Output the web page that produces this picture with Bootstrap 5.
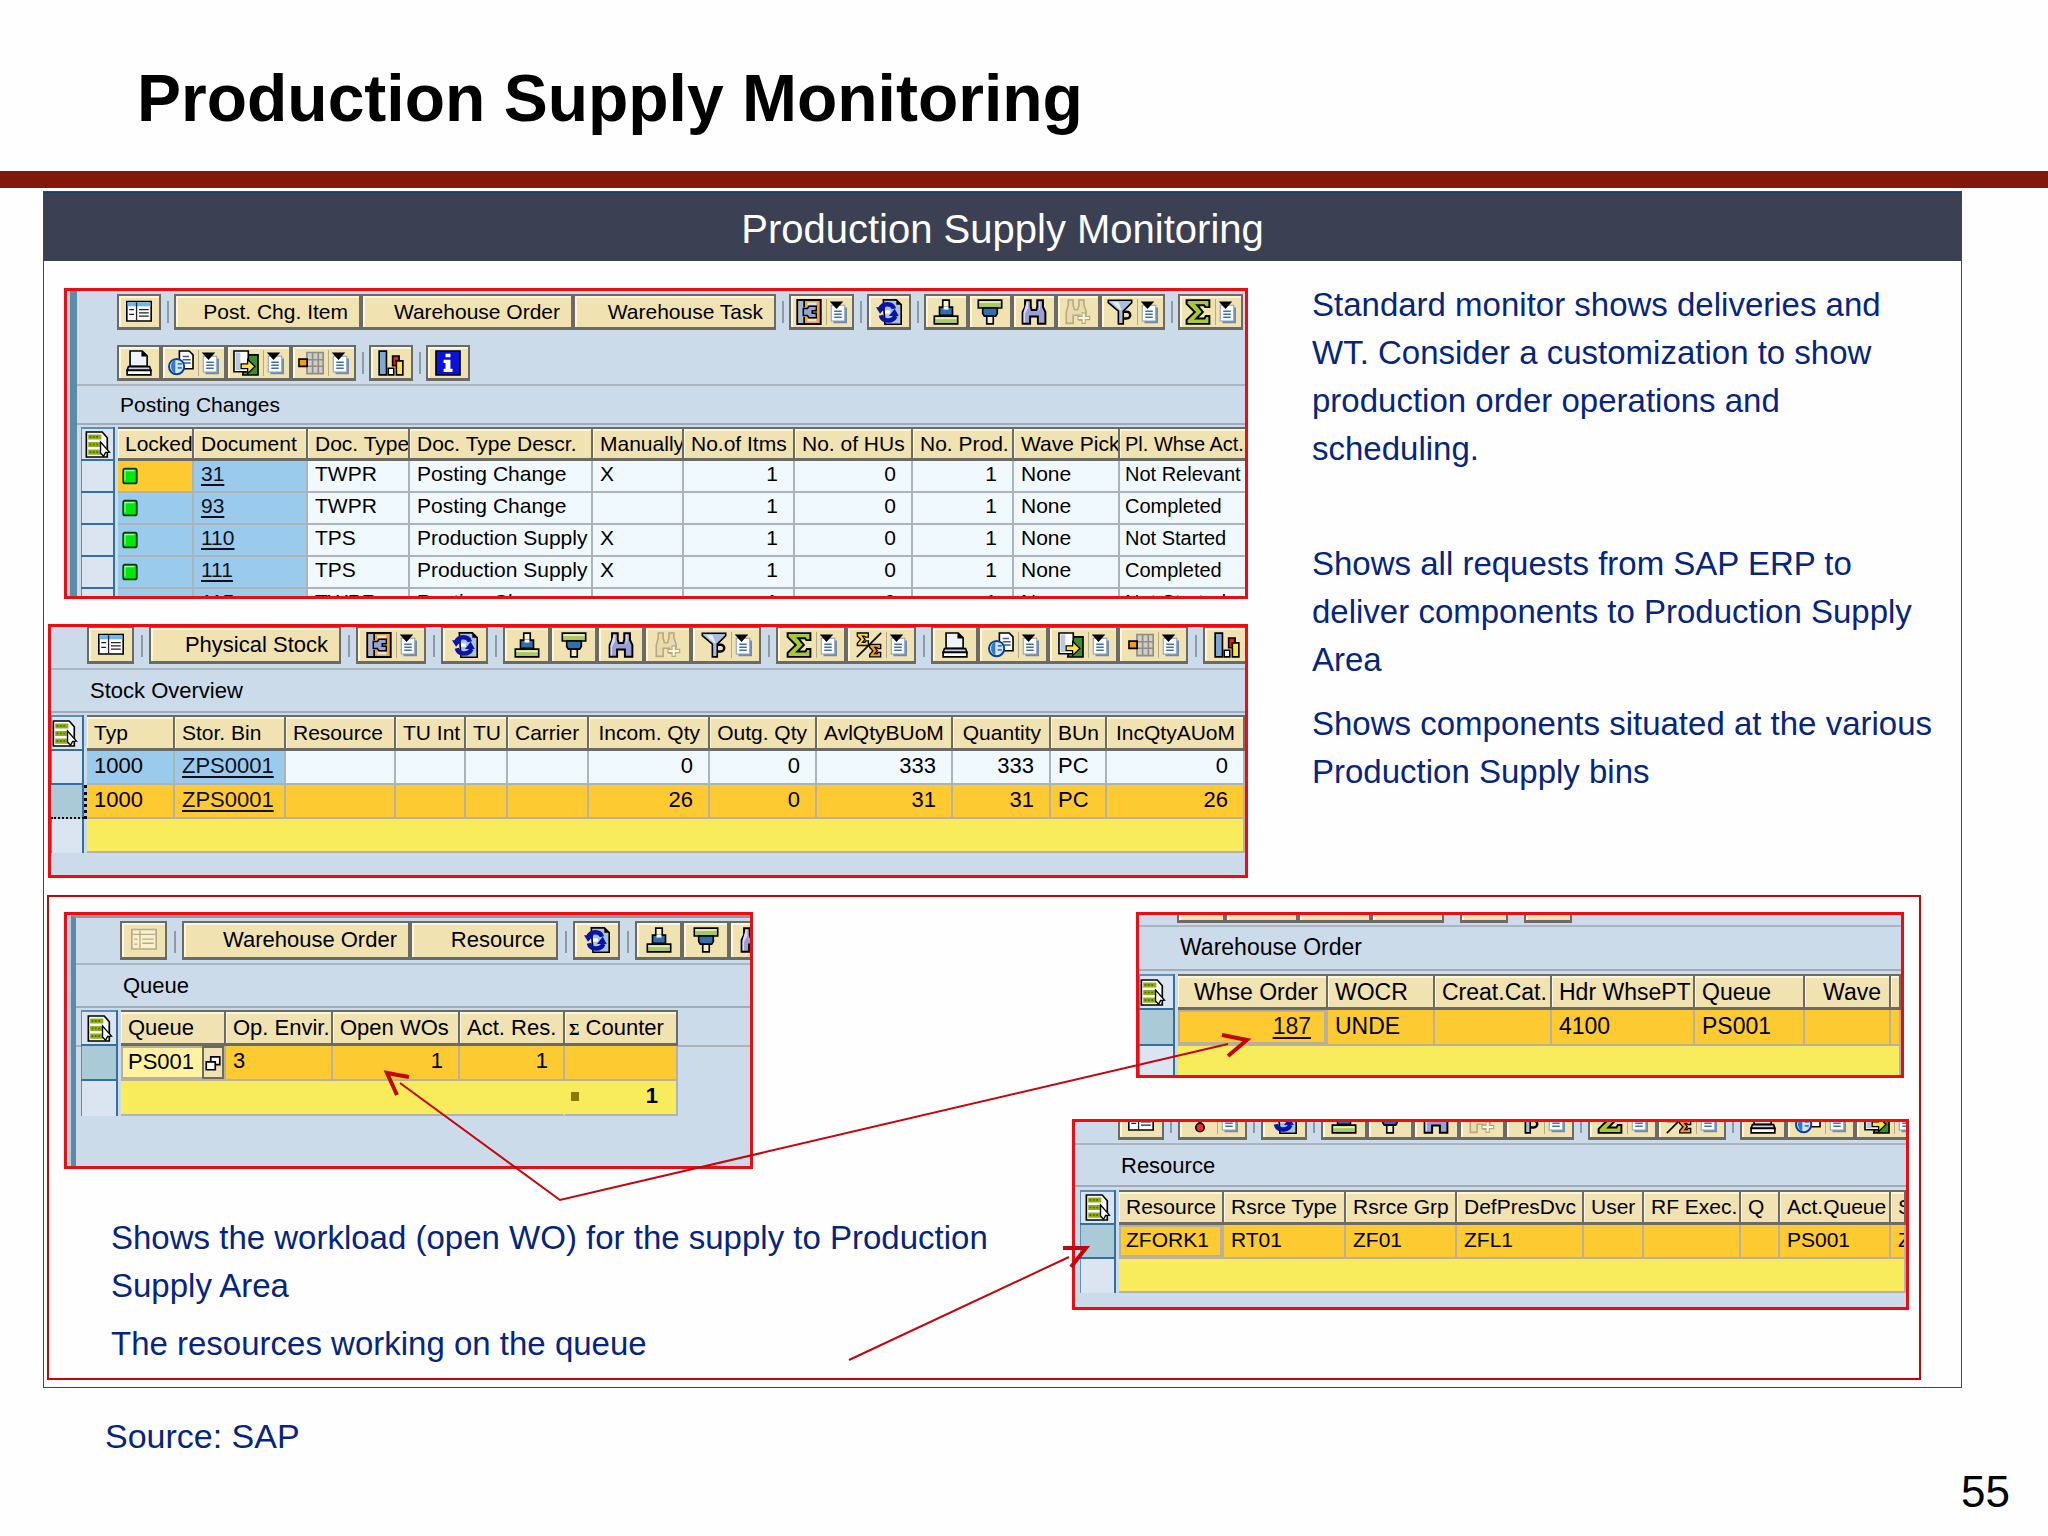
<!DOCTYPE html>
<html lang="en">
<head>
<meta charset="utf-8">
<meta name="viewport" content="width=device-width, initial-scale=1">
<title>Production Supply Monitoring</title>
<link href="https://cdn.jsdelivr.net/npm/bootstrap@5.3.0/dist/css/bootstrap.min.css" rel="stylesheet">
<style>
  body { background: #fefefe; font-family: "Liberation Sans", Arial, sans-serif; color: #000; }
  .slide-head { height: 188px; padding: 50px 0 0 137px; border-bottom: 17px solid #82170b; }
  .slide-head h1 { font: bold 66px/96px "Liberation Sans", Arial, sans-serif; margin: 0; }
  .slide-card { margin: 3px 86px 0 43px; border: 1px solid #3e4656; border-radius: 0; background: #fefefe; }
  .slide-card > .card-header { background: #3b4152; color: #fff; font-size: 40px; line-height: 48px; padding: 12px 0 8px; border: 0; border-top: 1px solid #1f3f63; border-radius: 0; }
  .slide-card > .card-body { padding: 27px 0 7px 3px; }
  .note { font-size: 33px; line-height: 48px; color: #06257c; margin: 0; }
  .top-area { grid-template-columns: minmax(0, 1201fr) minmax(0, 713fr); }
  .notes { padding: 0 22px 0 64px; margin-top: -7px; }
  .note-gap { margin-top: 67px; }
  .note-next { margin-top: 16px; }
  .flow-box { border: 2px solid #c4060c; margin: 17px 40px 0 0; padding-bottom: 10px; grid-template-columns: minmax(0, 1023fr) minmax(0, 847fr); }
  .flow-left { padding: 15px 40px 0 15px; }
  .flow-right { padding: 15px 10px 0 0; }
  .flow-text { margin: 45px 0 0 47px; }
  .flow-text .note + .note { margin-top: 10px; }
  .arrows { position: absolute; left: -2px; top: -2px; width: calc(100% + 4px); height: calc(100% + 4px); pointer-events: none; }
  .source { font-size: 34px; line-height: 40px; color: #06257c; margin: 28px 0 0 105px; }
  .page-no { font-size: 44px; line-height: 50px; padding: 11px 38px 0 0; margin: 0; }

  /* SAP GUI windows */
  .gui { border: 3px solid #ee0b12; background: #ccdbea; overflow: hidden; font-size: 22px; line-height: 26px; --ic: 47px; --mn: 70px; --sp: 15px; --bh: 38px; --th: 36px; --rh: 34px; --pad: 36px; --gap: 4px; }
  .gui-post { height: 311px; margin-left: 17px; font-size: 21px; --ic: 44px; --mn: 65px; --sp: 13px; --bh: 36px; --th: 34px; --rh: 32px; --pad: 40px; --gap: 3px; }
  .gui-stock { height: 254px; margin: 25px 0 0 1px; }
  .gui-queue { height: 257px; max-width: 689px; --bh: 39px; --rh: 35px; --pad: 44px; --gap: 3px; }
  .gui-order { height: 166px; margin-left: 64px; margin-right: 5px; font-size: 23px; --ic: 48px; --mn: 73px; --sp: 16px; --rh: 36px; --pad: 38px; --gap: 2px; }
  .gui-res { height: 191px; margin-top: 41px; --ic: 46px; --mn: 69px; --sp: 14px; --th: 35px; --pad: 43px; --gap: 3px; }
  .gui-stock .alv th, .gui-res .alv { font-size: 21px; }
  .gui-edge { border-left: 7px solid #5d8aa6; margin-left: 3px; height: 100%; box-shadow: -3px 0 0 #b5cfe0; padding-top: 3px; }
  .gui-queue .gui-edge { border-left-width: 5px; margin-left: 4px; border-top: 3px solid #8e9aa3; }

  .tools { display: flex; align-items: flex-end; overflow: hidden; white-space: nowrap; padding-left: var(--pad); height: var(--bh); }
  .tools + .tools { margin-top: 15px; }
  .gui-stock .tools { height: 37px; }
  .gui-order .tools { height: 8px; }
  .gui-res .tools { height: 18px; }
  .tools .btn { flex: none; height: var(--bh); width: var(--ic); padding: 0; border: 2px solid #6c6a64; border-bottom-width: 3px; border-radius: 0; background: #f0e2b1; box-shadow: inset 2px 2px 0 #fbf6de; font-size: inherit; line-height: 26px; color: #000; display: flex; align-items: center; justify-content: center; gap: 4px; }
  .tools .btn.more { width: var(--mn); }
  .tools .btn.wide { justify-content: flex-end; padding-right: 11px; width: var(--w); }
  .tools .rule { flex: none; width: var(--sp); height: 22px; margin-bottom: 7px; background: linear-gradient(#8f9aa6, #8f9aa6) center / 2px 100% no-repeat; }
  .tools svg { width: 26px; height: 26px; flex: none; }
  .tools svg.drop { width: 21px; border-left: 1px solid #b6ab88; padding-left: 2px; }
  .w-item { --w: 187px; } .w-order { --w: 212px; } .w-task { --w: 203px; } .w-stock { --w: 192px; } .w-queueorder { --w: 228px; } .w-resource { --w: 148px; }
  .gui-title { border-top: 2px solid #abb5c0; border-bottom: 2px solid #9fabb8; height: 45px; margin: var(--gap) 0 2px; line-height: 41px; font-size: inherit; font-weight: 400; white-space: nowrap; padding-left: calc(var(--pad) + 3px); }
  .gui-post .gui-title { height: 41px; line-height: 37px; }
  .gui-order .gui-title { margin-bottom: 3px; height: 46px; }
  .gui-res .gui-title { margin-bottom: 3px; height: 44px; }

  .alv { table-layout: fixed; width: 100%; border-collapse: separate; border-spacing: 0; white-space: nowrap; line-height: 24px; }
  .alv th { height: var(--th); padding: 0 0 0 7px; font-weight: 400; background: #f0e2b1; border-top: 2px solid #6c6a64; border-right: 2px solid #6c6a64; border-bottom: 3px solid #6c6a64; box-shadow: inset 1px 2px 0 #fbf6de; overflow: hidden; vertical-align: middle; }
  .alv td { height: var(--rh); padding: 0 0 3px 7px; background: #f0f9fe; border-right: 2px solid #adb4b8; border-bottom: 2px solid #adb4b8; overflow: hidden; vertical-align: middle; }
  .gui-post .alv td { padding-bottom: 4px; }
  .gui-post .alv tr > :last-child { font-size: 20px; padding-left: 5px; border-right: 0; }
  .alv .end { text-align: right; padding-right: 15px; }
  .alv th.end { padding-right: 8px; }
  .alv td.key { background: #9acbec; }
  .alv td.hot { background: #fdca31; }
  .alv tr.on td { background: #fdca31; border-color: #b9b19b; }
  .alv tr.on td.cursor { box-shadow: inset 0 0 0 2px #b9b09c; }
  .alv tr.sum td { background: #f8ec5c; }
  .alv a { color: #101020; text-decoration: underline; text-underline-offset: 3px; text-decoration-thickness: 2px; }
  .alv tr .sel { padding: 0; border-top: 0; border-bottom: 0; border-right: 3px solid #ccdbea; background: #dbe5f2; box-shadow: inset -2px -2px 0 #336f9f, inset 1px 0 0 #5d8fb6; }
  .alv tr th.sel { box-shadow: inset -2px -2px 0 #336f9f, inset 1px 2px 0 #5d8fb6; }
  .alv tr.on td.sel { background: #abcad7; border-color: #ccdbea; }
  .alv tr.sum td.sel { background: #dbe5f2; box-shadow: inset -2px 0 0 #336f9f, inset 1px 0 0 #5d8fb6; }
  .alv tr.focus-row td.sel { border-right: 3px dotted #000; border-bottom: 2px dotted #000; box-shadow: inset -2px 0 0 #336f9f; }
  .alv th.sel svg { width: 26px; height: 27px; display: block; margin: 0 auto; }
  .gui-stock .alv th.sel svg, .gui-order .alv th.sel svg { margin-left: 1px; }
  .alv svg.led { width: 18px; height: 18px; display: block; }
  .gui-post .alv td.led-cell { padding-left: 3px; padding-bottom: 0; }
  .gui-post .alv { margin-left: 4px; width: calc(100% - 4px); }
  .gui-queue .alv { margin-left: 5px; width: 597px; }
  .gui-queue .grid-band { background: linear-gradient(#adb4b8, #adb4b8) 0 35px / 100% 2px no-repeat; }
  .gui-res .alv { margin-left: 5px; width: calc(100% - 5px); }
  .alv td.entry { padding: 0; }
  .entry input { flex: 1 1 0; min-width: 0; height: 33px; border: 2px solid #b9b09c; border-right: 0; padding: 0 0 2px 5px; background: #fff2a0; font: inherit; color: #000; border-radius: 0; }
  .entry button { width: 22px; height: 33px; padding: 0; border: 2px solid #6c6a64; background: #f0e2b1; display: flex; align-items: center; }
  .entry button svg { width: 18px; height: 18px; }
  .alv .sigma { padding-left: 4px; }
  .sigma b { font: bold 16px/20px "Liberation Serif", serif; }
  .alv tr.sum td.total { padding-left: 6px; padding-right: 18px; font-weight: 700; }
  .alv tr.sum td.blank { border-right-color: #f8ec5c; }
  .dot { width: 8px; height: 9px; background: #8a7a00; }

  /* column widths of the grids */
  .c36 { width: 36px; } .c37 { width: 37px; } .c39 { width: 39px; } .c40 { width: 40px; } .c42 { width: 42px; } .c56 { width: 56px; } .c60 { width: 60px; } .c70 { width: 70px; }
  .c76 { width: 76px; } .c81 { width: 81px; } .c86 { width: 86px; } .c88 { width: 88px; } .c91 { width: 91px; } .c97 { width: 97px; } .c98 { width: 98px; } .c101 { width: 101px; }
  .c102 { width: 102px; } .c105 { width: 105px; } .c106 { width: 106px; } .c107 { width: 107px; } .c110 { width: 110px; } .c111 { width: 111px; } .c114 { width: 114px; }
  .c117 { width: 117px; } .c118 { width: 118px; } .c121 { width: 121px; } .c122 { width: 122px; } .c127 { width: 127px; } .c136 { width: 136px; } .c143 { width: 143px; }
  .c150 { width: 150px; } .c183 { width: 183px; }
</style>
</head>
<body>
<svg class="d-none" aria-hidden="true">
  <symbol id="i-detail" viewBox="0 0 16 16"><path fill="#fff" stroke="#000" d="M.5 1.500h15v12H.5z"/><path fill="#6db6f2" d="M1 2h14v2.500H1z"/><path stroke="#222" d="M6.500 2v11M2 6.500h3M2 9.500h3M8 6.500h6M8 8.500h6M8 10.500h6" stroke-width=".8"/></symbol>
  <symbol id="i-detail-off" viewBox="0 0 16 16"><path fill="#f8f0cf" stroke="#b5ab85" d="M.5 1.500h15v12H.5z"/><path stroke="#b5ab85" d="M1 4.500h14M5.500 2v11M2 7.500h2M2 10.500h2M7 7.500h7M7 10h7" stroke-width=".8"/></symbol>
  <symbol id="i-drop" viewBox="0 0 12 16"><path fill="#6f8db3" d="M3 5h9v10.500H3z"/><path fill="#fff" stroke="#8ba0bd" stroke-width=".7" d="M1.500 3.500h9v10.500h-9z"/><path stroke="#3f6fb5" d="M3.500 7.500h5M3.500 9.500h5M3.500 11.500h5"/><path d="M.5 1h9L5 6z"/></symbol>
  <symbol id="i-view" viewBox="0 0 16 16"><path fill="#f3a62c" stroke="#000" stroke-width="1.200" d="M.8.6h14.400v14.800H.8z"/><path fill="#a3b7e0" d="M1.500 1.200h3.300v13.600H1.500z"/><path fill="none" stroke="#000" d="M5 1v4M5 11v4"/><path fill="#dbe4f6" d="M7 2.200h5.500v1.500H7zM7 12.300h5.500v1.500H7z"/><path fill="#8fa5da" stroke="#000" stroke-width=".9" d="M4.500 5.800H7l1-1.300h4.500v2.700H10v1.600h2.500v2.700H8l-1-1.300H4.500z"/></symbol>
  <symbol id="i-refresh" viewBox="0 0 16 16"><path fill="#a9c2dd" stroke="#000" d="M4.500.5h8l3 3v12h-10z"/><path fill="none" stroke="#0a12a8" stroke-width="2.800" d="M11 6C10 2.500 4 2 2.500 6.500M3 10c1 4 7 4.500 9 .5"/><path fill="#0a12a8" d="M0 5h6L2.500 9zM8 10.500h6L11.500 6z"/><path fill="#fff" d="M5.500 7h3v2h-3z"/><path d="M12.500.5l3 3h-3z"/></symbol>
  <symbol id="i-asc" viewBox="0 0 16 16"><path fill="#fff8c4" stroke="#000" d="M6 .7h4v4.300H6z"/><path fill="#2f6fb0" stroke="#000" d="M4 5h8v5H4z"/><path fill="#fff" d="M6.500 4.500h3v2h-3z"/><path fill="#a9c765" stroke="#000" d="M.8 10.500h14.400v4.800H.8z"/><path fill="#e4f0a8" d="M1.500 11.200h13v1.200h-13z"/></symbol>
  <symbol id="i-desc" viewBox="0 0 16 16"><path fill="#a9c765" stroke="#000" d="M.8.7h14.400v4.800H.8z"/><path fill="#e4f0a8" d="M1.500 1.300h13v1.200h-13z"/><path fill="#2f6fb0" stroke="#000" d="M3.500 5.500h9v3.500l-1 1.500h-7l-1-1.500z"/><path fill="#f3f0c8" stroke="#000" d="M6 10.500h4v4.800H6z"/></symbol>
  <symbol id="i-find" viewBox="0 0 16 16"><path fill="#9aa0d6" stroke="#000" stroke-width="1.200" d="M2.500.8h3.500v4l.6 2h2.800l.6-2v-4h3.500v4l1.500 3.200v7.200h-4.600v-4.400H5.600v4.400H1V8l1.500-3.200z"/><path fill="#d7daf2" d="M3.500 1.500h1v4L2.500 9v5.500h-1V8.500zM11 1.500h1v3l-1 3z"/></symbol>
  <symbol id="i-next" viewBox="0 0 16 16"><path fill="#e9dbae" stroke="#b5aa83" d="M2 .6h3v3l.8 3h2l.8-3v-3h3v3l1.400 4v2H11v3.400H9v-3H5v5H.8V8L2 3.600z"/><path fill="#fff9e0" stroke="#b5aa83" stroke-width=".7" d="M10.500 8.500h2v2.200h2.700v2h-2.700V15h-2v-2.300H8v-2h2.500z"/></symbol>
  <symbol id="i-filter" viewBox="0 0 16 16"><path fill="#a6bfdc" stroke="#000" d="M.8.8h14.400v1.500L10 7.500v7.800H7V7.500L.8 2.300z"/><path fill="#e2ecf8" d="M3 1.800h4l2 5H8z"/><path fill="none" stroke="#000" stroke-width="1.500" d="M10 7.800h2.200a2 2 0 0 1 0 4.200H10"/></symbol>
  <symbol id="i-sum" viewBox="0 0 16 16"><path fill="#a6c934" stroke="#000" stroke-width="1.200" d="M1 .7h14V5h-2.500l-.8-1.200H7.500L11 8l-4 4h5l.8-1.500H15v4.800H1v-2.500L6 8 1 3z"/></symbol>
  <symbol id="i-subtotal" viewBox="0 0 16 16"><path fill="#ffe21f" stroke="#000" stroke-width=".8" d="M.8.6h6.800v2.600H6L5 2.500H4L5.500 4.500 4 6.300h1.500L6 5.500h1.600v2.800H.8V7l2-2.500-2-2z"/><path fill="#f79a1d" stroke="#000" stroke-width=".8" d="M8.400 7.600h6.800v2.600h-1.600l-1-.7h-1l1.500 2-1.500 1.800h1.500l.5-.8h1.600v2.800H8.400V14l2-2.500-2-2z"/><path stroke="#000" d="M15.500.5.500 15.500"/></symbol>
  <symbol id="i-print" viewBox="0 0 16 16"><path fill="#eef4fc" stroke="#000" d="M2.500.6h7.500l3 3V10H2.500z"/><path d="M9.500.6l3.500 3.400H9.500z"/><path fill="#c9d4e4" stroke="#000" d="M1.500 10.200h13l.8 2.300H.7z"/><path fill="#fff" stroke="#000" d="M.7 12.500h14.600v2.800H.7z"/></symbol>
  <symbol id="i-preview" viewBox="0 0 16 16"><path fill="#fff" stroke="#000" d="M7 .6h6l2.400 2.400v8.500H7z"/><path stroke="#3f5f95" d="M9 4h4M9 6h5M9 8h5"/><circle cx="5.300" cy="10.200" r="4.700" fill="#cfe4f8" stroke="#0b3f94" stroke-width="1.200"/><path fill="#3579c6" d="M4.500 6C1 7 1 13 4.500 14.500z"/><path stroke="#3579c6" d="M6 8.500h2.500M6 11h2.500"/></symbol>
  <symbol id="i-export" viewBox="0 0 16 16"><path fill="#3f8b30" stroke="#000" d="M8 3h7.400v12.400H6z"/><path fill="#fff" stroke="#000" d="M.6.6h8.800v12.800H.6z"/><path fill="#b8c9e2" d="M1.500 1.500h3v11h-3z"/><path fill="#ffe23a" stroke="#000" stroke-width=".8" d="M5 8.500h4V5.800l4.500 4.300L9 14.500v-3H5z"/></symbol>
  <symbol id="i-layout" viewBox="0 0 16 16"><path fill="#d0cec8" stroke="#8f8c84" d="M5.500 1.500h10v13h-10zM5.500 6h10M5.500 10h10M9 1.500v13M12.500 1.500v13"/><path fill="#f39a1d" stroke="#000" d="M.6 5.600h5v4.500h-5z"/></symbol>
  <symbol id="i-chart" viewBox="0 0 16 16"><path fill="#7ea7d6" stroke="#000" d="M.7.7h4.500v14.600H.7z"/><path fill="#fff" stroke="#000" d="M6.300 11.200h3.400v4.100H6.300z"/><path fill="#e11d1d" stroke="#000" d="M9 3.700h4v6H9z"/><path fill="#ffe23a" stroke="#000" d="M11.300 6.700h4v8.600h-4z"/></symbol>
  <symbol id="i-info" viewBox="0 0 16 16"><path fill="#0812d8" stroke="#000" d="M.6.6h14.800v14.800H.6z"/><path fill="#fff" d="M6.500 2.300h3v2.200h-3zM5.300 6h4.200v5.500h1.300v2H5.300v-2h1.200V8H5.300z"/></symbol>
  <symbol id="i-light" viewBox="0 0 16 16"><path stroke="#000" stroke-width="2" d="M8 1v9"/><circle cx="8" cy="12" r="2.600" fill="#ef2b1d" stroke="#000"/></symbol>
  <symbol id="i-all" viewBox="0 0 15 16"><path fill="#fff" stroke="#000" d="M.6.6h9.400L13 4v11.400H.6z"/><path fill="#8fae12" d="M1.700 2h7.800v3H1.700zM1.700 6.500h7.800v3H1.700zM1.700 11h7.800v3H1.700z"/><path stroke="#4e650a" stroke-dasharray="1 1" d="M2.500 3.500h6M2.500 8h6M2.500 12.500h6"/><path fill="#fff" stroke="#000" stroke-width=".8" d="M9 6.500l5.300 6-2.300.2L10.800 15 9 13z"/></symbol>
  <symbol id="i-led" viewBox="0 0 16 16"><rect x="2" y="1.500" width="12" height="13" rx="1.500" fill="#00e80c" stroke="#063c06" stroke-width="1.600"/><path stroke="#9dff9d" fill="none" d="M3.500 12V3.200H12"/></symbol>
  <symbol id="i-f4" viewBox="0 0 16 16"><path fill="#fff" stroke="#000" stroke-width="1.500" d="M6 2.500h8v7H6z"/><path fill="#fff" stroke="#000" stroke-width="1.500" d="M2 7h8v7H2z"/></symbol>
</svg>

<header class="slide-head"><h1>Production Supply Monitoring</h1></header>

<main class="card slide-card">
  <div class="card-header text-center">Production Supply Monitoring</div>
  <div class="card-body">
    <div class="d-grid top-area">
      <div class="shots">

        <section class="gui gui-post">
          <div class="gui-edge">
            <div class="tools">
              <button class="btn" type="button" aria-label="Details"><svg><use href="#i-detail"/></svg></button>
              <span class="rule"></span>
              <button class="btn wide w-item" type="button">Post. Chg. Item</button>
              <button class="btn wide w-order" type="button">Warehouse Order</button>
              <button class="btn wide w-task" type="button">Warehouse Task</button>
              <span class="rule"></span>
              <button class="btn more" type="button" aria-label="Views"><svg><use href="#i-view"/></svg><svg class="drop"><use href="#i-drop"/></svg></button>
              <span class="rule"></span>
              <button class="btn" type="button" aria-label="Refresh"><svg><use href="#i-refresh"/></svg></button>
              <span class="rule"></span>
              <button class="btn" type="button" aria-label="Sort ascending"><svg><use href="#i-asc"/></svg></button>
              <button class="btn" type="button" aria-label="Sort descending"><svg><use href="#i-desc"/></svg></button>
              <button class="btn" type="button" aria-label="Find"><svg><use href="#i-find"/></svg></button>
              <button class="btn" type="button" aria-label="Find next"><svg><use href="#i-next"/></svg></button>
              <button class="btn more" type="button" aria-label="Filter"><svg><use href="#i-filter"/></svg><svg class="drop"><use href="#i-drop"/></svg></button>
              <span class="rule"></span>
              <button class="btn more" type="button" aria-label="Total"><svg><use href="#i-sum"/></svg><svg class="drop"><use href="#i-drop"/></svg></button>
            </div>
            <div class="tools">
              <button class="btn" type="button" aria-label="Print"><svg><use href="#i-print"/></svg></button>
              <button class="btn more" type="button" aria-label="Preview"><svg><use href="#i-preview"/></svg><svg class="drop"><use href="#i-drop"/></svg></button>
              <button class="btn more" type="button" aria-label="Export"><svg><use href="#i-export"/></svg><svg class="drop"><use href="#i-drop"/></svg></button>
              <button class="btn more" type="button" aria-label="Layout"><svg><use href="#i-layout"/></svg><svg class="drop"><use href="#i-drop"/></svg></button>
              <span class="rule"></span>
              <button class="btn" type="button" aria-label="Chart"><svg><use href="#i-chart"/></svg></button>
              <span class="rule"></span>
              <button class="btn" type="button" aria-label="Information"><svg><use href="#i-info"/></svg></button>
            </div>
            <h2 class="gui-title">Posting Changes</h2>
            <table class="alv">
              <colgroup><col class="c37"><col class="c76"><col class="c114"><col class="c102"><col class="c183"><col class="c91"><col class="c111"><col class="c118"><col class="c101"><col class="c106"><col></colgroup>
              <thead><tr><th class="sel"><svg><use href="#i-all"/></svg></th><th>Locked</th><th>Document</th><th>Doc. Type</th><th>Doc. Type Descr.</th><th>Manually</th><th>No.of Itms</th><th>No. of HUs</th><th>No. Prod.</th><th>Wave Pick</th><th>Pl. Whse Act.</th></tr></thead>
              <tbody>
                <tr><td class="sel"></td><td class="hot led-cell"><svg class="led"><use href="#i-led"/></svg></td><td class="key"><a href="#">31</a></td><td>TWPR</td><td>Posting Change</td><td>X</td><td class="end">1</td><td class="end">0</td><td class="end">1</td><td>None</td><td>Not Relevant</td></tr>
                <tr><td class="sel"></td><td class="key led-cell"><svg class="led"><use href="#i-led"/></svg></td><td class="key"><a href="#">93</a></td><td>TWPR</td><td>Posting Change</td><td></td><td class="end">1</td><td class="end">0</td><td class="end">1</td><td>None</td><td>Completed</td></tr>
                <tr><td class="sel"></td><td class="key led-cell"><svg class="led"><use href="#i-led"/></svg></td><td class="key"><a href="#">110</a></td><td>TPS</td><td>Production Supply</td><td>X</td><td class="end">1</td><td class="end">0</td><td class="end">1</td><td>None</td><td>Not Started</td></tr>
                <tr><td class="sel"></td><td class="key led-cell"><svg class="led"><use href="#i-led"/></svg></td><td class="key"><a href="#">111</a></td><td>TPS</td><td>Production Supply</td><td>X</td><td class="end">1</td><td class="end">0</td><td class="end">1</td><td>None</td><td>Completed</td></tr>
                <tr><td class="sel"></td><td class="key led-cell"></td><td class="key"><a href="#">115</a></td><td>TWPR</td><td>Posting Change</td><td></td><td class="end">1</td><td class="end">0</td><td class="end">1</td><td>None</td><td>Not Started</td></tr>
              </tbody>
            </table>
          </div>
        </section>

        <section class="gui gui-stock">
          <div class="tools">
            <button class="btn" type="button" aria-label="Details"><svg><use href="#i-detail"/></svg></button>
            <span class="rule"></span>
            <button class="btn wide w-stock" type="button">Physical Stock</button>
            <span class="rule"></span>
            <button class="btn more" type="button" aria-label="Views"><svg><use href="#i-view"/></svg><svg class="drop"><use href="#i-drop"/></svg></button>
            <span class="rule"></span>
            <button class="btn" type="button" aria-label="Refresh"><svg><use href="#i-refresh"/></svg></button>
            <span class="rule"></span>
            <button class="btn" type="button" aria-label="Sort ascending"><svg><use href="#i-asc"/></svg></button>
            <button class="btn" type="button" aria-label="Sort descending"><svg><use href="#i-desc"/></svg></button>
            <button class="btn" type="button" aria-label="Find"><svg><use href="#i-find"/></svg></button>
            <button class="btn" type="button" aria-label="Find next"><svg><use href="#i-next"/></svg></button>
            <button class="btn more" type="button" aria-label="Filter"><svg><use href="#i-filter"/></svg><svg class="drop"><use href="#i-drop"/></svg></button>
            <span class="rule"></span>
            <button class="btn more" type="button" aria-label="Total"><svg><use href="#i-sum"/></svg><svg class="drop"><use href="#i-drop"/></svg></button>
            <button class="btn more" type="button" aria-label="Subtotal"><svg><use href="#i-subtotal"/></svg><svg class="drop"><use href="#i-drop"/></svg></button>
            <span class="rule"></span>
            <button class="btn" type="button" aria-label="Print"><svg><use href="#i-print"/></svg></button>
            <button class="btn more" type="button" aria-label="Preview"><svg><use href="#i-preview"/></svg><svg class="drop"><use href="#i-drop"/></svg></button>
            <button class="btn more" type="button" aria-label="Export"><svg><use href="#i-export"/></svg><svg class="drop"><use href="#i-drop"/></svg></button>
            <button class="btn more" type="button" aria-label="Layout"><svg><use href="#i-layout"/></svg><svg class="drop"><use href="#i-drop"/></svg></button>
            <span class="rule"></span>
            <button class="btn" type="button" aria-label="Chart"><svg><use href="#i-chart"/></svg></button>
          </div>
          <h2 class="gui-title">Stock Overview</h2>
          <table class="alv">
            <colgroup><col class="c36"><col class="c88"><col class="c111"><col class="c110"><col class="c70"><col class="c42"><col class="c81"><col class="c121"><col class="c107"><col class="c136"><col class="c98"><col class="c56"><col></colgroup>
            <thead><tr><th class="sel"><svg><use href="#i-all"/></svg></th><th>Typ</th><th>Stor. Bin</th><th>Resource</th><th>TU Int</th><th>TU</th><th>Carrier</th><th class="end">Incom. Qty</th><th class="end">Outg. Qty</th><th class="end">AvlQtyBUoM</th><th class="end">Quantity</th><th>BUn</th><th class="end">IncQtyAUoM</th></tr></thead>
            <tbody>
              <tr><td class="sel"></td><td class="key">1000</td><td class="key"><a href="#">ZPS0001</a></td><td></td><td></td><td></td><td></td><td class="end">0</td><td class="end">0</td><td class="end">333</td><td class="end">333</td><td>PC</td><td class="end">0</td></tr>
              <tr class="on focus-row"><td class="sel"></td><td>1000</td><td><a href="#">ZPS0001</a></td><td></td><td></td><td></td><td></td><td class="end">26</td><td class="end">0</td><td class="end">31</td><td class="end">31</td><td>PC</td><td class="end">26</td></tr>
              <tr class="sum"><td class="sel"></td><td colspan="12"></td></tr>
            </tbody>
          </table>
        </section>
      </div>

      <div class="notes">
        <p class="note">Standard monitor shows deliveries and WT. Consider a customization to show production order operations and scheduling.</p>
        <p class="note note-gap">Shows all requests from SAP ERP to deliver components to Production Supply Area</p>
        <p class="note note-next">Shows components situated at the various Production Supply bins</p>
      </div>
    </div>

    <div class="flow-box position-relative d-grid">
      <div class="flow-left">
        <section class="gui gui-queue">
          <div class="gui-edge">
            <div class="tools">
              <button class="btn" type="button" aria-label="Details"><svg><use href="#i-detail-off"/></svg></button>
              <span class="rule"></span>
              <button class="btn wide w-queueorder" type="button">Warehouse Order</button>
              <button class="btn wide w-resource" type="button">Resource</button>
              <span class="rule"></span>
              <button class="btn" type="button" aria-label="Refresh"><svg><use href="#i-refresh"/></svg></button>
              <span class="rule"></span>
              <button class="btn" type="button" aria-label="Sort ascending"><svg><use href="#i-asc"/></svg></button>
              <button class="btn" type="button" aria-label="Sort descending"><svg><use href="#i-desc"/></svg></button>
              <button class="btn" type="button" aria-label="Find"><svg><use href="#i-find"/></svg></button>
            </div>
            <h2 class="gui-title">Queue</h2>
            <div class="grid-band">
              <table class="alv">
                <colgroup><col class="c40"><col class="c105"><col class="c107"><col class="c127"><col class="c105"><col></colgroup>
                <thead><tr><th class="sel"><svg><use href="#i-all"/></svg></th><th>Queue</th><th>Op. Envir.</th><th>Open WOs</th><th>Act. Res.</th><th class="sigma"><b>&Sigma;</b> Counter</th></tr></thead>
                <tbody>
                  <tr class="on"><td class="sel"></td><td class="entry"><div class="d-flex"><input type="text" value="PS001" aria-label="Queue"><button type="button" aria-label="Value help"><svg><use href="#i-f4"/></svg></button></div></td><td>3</td><td class="end">1</td><td class="end">1</td><td></td></tr>
                  <tr class="sum"><td class="sel"></td><td class="blank" colspan="4"></td><td class="total"><div class="d-flex justify-content-between align-items-center"><span class="dot"></span><span>1</span></div></td></tr>
                </tbody>
              </table>
            </div>
          </div>
        </section>
        <div class="flow-text">
          <p class="note">Shows the workload (open WO) for the supply to Production Supply Area</p>
          <p class="note">The resources working on the queue</p>
        </div>
      </div>

      <div class="flow-right">
        <section class="gui gui-order">
          <div class="tools">
            <button class="btn" type="button" aria-label="Print"></button>
            <button class="btn more" type="button" aria-label="Preview"></button>
            <button class="btn more" type="button" aria-label="Export"></button>
            <button class="btn more" type="button" aria-label="Layout"></button>
            <span class="rule invisible"></span>
            <button class="btn" type="button" aria-label="Chart"></button>
            <span class="rule invisible"></span>
            <button class="btn" type="button" aria-label="Information"></button>
          </div>
          <h2 class="gui-title">Warehouse Order</h2>
          <table class="alv">
            <colgroup><col class="c39"><col class="c150"><col class="c107"><col class="c117"><col class="c143"><col class="c110"><col class="c86"><col></colgroup>
            <thead><tr><th class="sel"><svg><use href="#i-all"/></svg></th><th class="end">Whse Order</th><th>WOCR</th><th>Creat.Cat.</th><th>Hdr WhsePT</th><th>Queue</th><th class="end">Wave</th><th></th></tr></thead>
            <tbody>
              <tr class="on"><td class="sel"></td><td class="cursor end"><a href="#">187</a></td><td>UNDE</td><td></td><td>4100</td><td>PS001</td><td></td><td></td></tr>
              <tr class="sum"><td class="sel"></td><td colspan="7"></td></tr>
            </tbody>
          </table>
        </section>

        <section class="gui gui-res">
          <div class="tools">
            <button class="btn" type="button" aria-label="Details"><svg><use href="#i-detail"/></svg></button>
            <span class="rule"></span>
            <button class="btn more" type="button" aria-label="Status"><svg><use href="#i-light"/></svg><svg class="drop"><use href="#i-drop"/></svg></button>
            <span class="rule"></span>
            <button class="btn" type="button" aria-label="Refresh"><svg><use href="#i-refresh"/></svg></button>
            <span class="rule"></span>
            <button class="btn" type="button" aria-label="Sort ascending"><svg><use href="#i-asc"/></svg></button>
            <button class="btn" type="button" aria-label="Sort descending"><svg><use href="#i-desc"/></svg></button>
            <button class="btn" type="button" aria-label="Find"><svg><use href="#i-find"/></svg></button>
            <button class="btn" type="button" aria-label="Find next"><svg><use href="#i-next"/></svg></button>
            <button class="btn more" type="button" aria-label="Filter"><svg><use href="#i-filter"/></svg><svg class="drop"><use href="#i-drop"/></svg></button>
            <span class="rule"></span>
            <button class="btn more" type="button" aria-label="Total"><svg><use href="#i-sum"/></svg><svg class="drop"><use href="#i-drop"/></svg></button>
            <button class="btn more" type="button" aria-label="Subtotal"><svg><use href="#i-subtotal"/></svg><svg class="drop"><use href="#i-drop"/></svg></button>
            <span class="rule"></span>
            <button class="btn" type="button" aria-label="Print"><svg><use href="#i-print"/></svg></button>
            <button class="btn more" type="button" aria-label="Preview"><svg><use href="#i-preview"/></svg><svg class="drop"><use href="#i-drop"/></svg></button>
            <button class="btn more" type="button" aria-label="Export"><svg><use href="#i-export"/></svg><svg class="drop"><use href="#i-drop"/></svg></button>
          </div>
          <h2 class="gui-title">Resource</h2>
          <table class="alv">
            <colgroup><col class="c39"><col class="c105"><col class="c122"><col class="c111"><col class="c127"><col class="c60"><col class="c97"><col class="c39"><col class="c111"><col></colgroup>
            <thead><tr><th class="sel"><svg><use href="#i-all"/></svg></th><th>Resource</th><th>Rsrce Type</th><th>Rsrce Grp</th><th>DefPresDvc</th><th>User</th><th>RF Exec.</th><th>Q</th><th>Act.Queue</th><th>S</th></tr></thead>
            <tbody>
              <tr class="on"><td class="sel"></td><td class="cursor">ZFORK1</td><td>RT01</td><td>ZF01</td><td>ZFL1</td><td></td><td></td><td></td><td>PS001</td><td>Z</td></tr>
              <tr class="sum"><td class="sel"></td><td colspan="9"></td></tr>
            </tbody>
          </table>
        </section>
      </div>

      <svg class="arrows" viewBox="0 0 1874 485" preserveAspectRatio="none" fill="none" stroke="#c4060c" aria-hidden="true">
        <path stroke-width="2" d="M353 188 513 305 1181 149M802 465 1022 362"/>
        <path stroke-width="4" d="M362 182 340 178 350 200M1175 140 1200 145 1181 161M1016 353 1039 353 1024 372"/>
      </svg>
    </div>
  </div>
</main>

<footer>
  <p class="source">Source: SAP</p>
  <p class="page-no text-end">55</p>
</footer>
<script src="https://cdn.jsdelivr.net/npm/bootstrap@5.3.0/dist/js/bootstrap.bundle.min.js"></script>
</body>
</html>
